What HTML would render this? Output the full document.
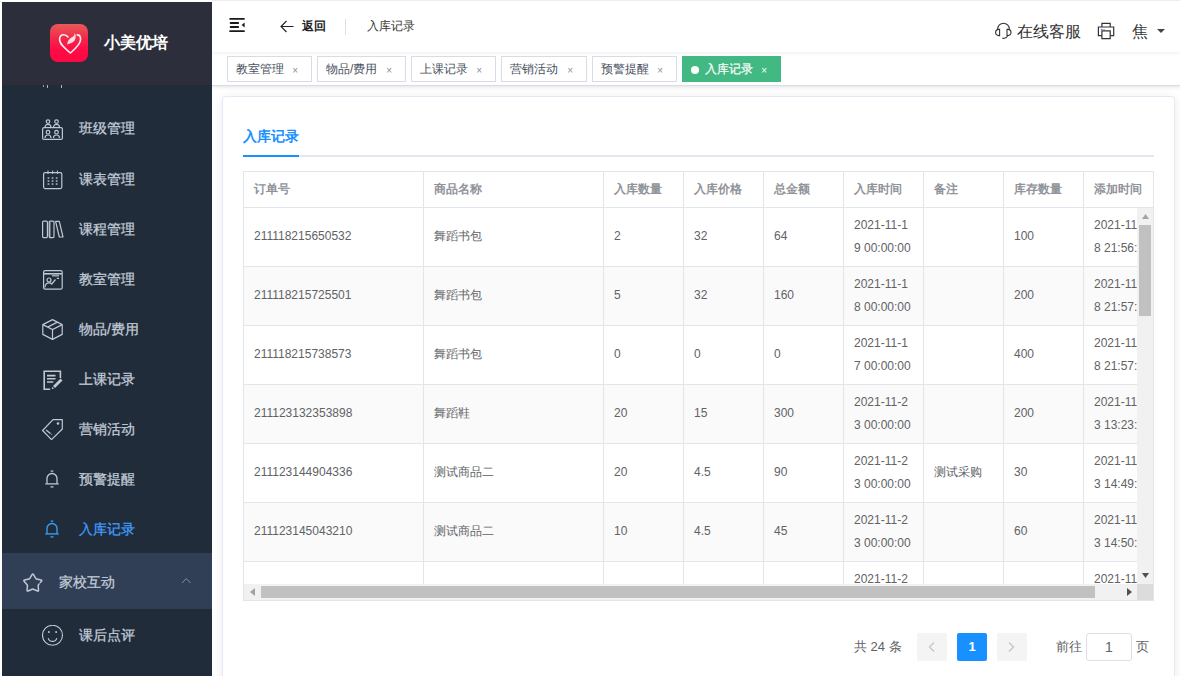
<!DOCTYPE html>
<html><head><meta charset="utf-8">
<style>
*{margin:0;padding:0;box-sizing:border-box}
html,body{width:1180px;height:676px;overflow:hidden;background:#fff;font-family:"Liberation Sans",sans-serif;position:relative}
.abs{position:absolute}
#side{position:absolute;left:2px;top:2px;width:210px;height:674px;background:#212c3b;overflow:hidden;z-index:10}
#logo{position:absolute;left:0;top:0;width:210px;height:83px;background:#2c2f3b}
.logobox{position:absolute;left:48px;top:22px;width:38px;height:38px;border-radius:8px;background:linear-gradient(#e75a58,#f5254a 40%,#ff0a44 70%,#ff0844)}
.logotxt{position:absolute;left:102px;top:30px;font-size:16px;font-weight:bold;color:#fff;line-height:22px;letter-spacing:0}
.mi{position:absolute;left:0;width:210px;height:50px;color:#bfcbd9;font-size:14px}
.mi .t{position:absolute;left:77px;top:0;line-height:50px}
.mi svg{position:absolute;left:40px;top:15px}
#hdr{position:absolute;left:212px;top:0;width:968px;height:52px;background:#fff;z-index:3;box-shadow:0 1px 4px rgba(0,21,41,.08)}
#tags{position:absolute;left:212px;top:52px;width:968px;height:34px;background:#fff;border-bottom:1px solid #d8dce5;z-index:2;box-shadow:0 1px 4px 0 rgba(0,0,0,.12)}
.tag{position:absolute;top:4px;height:26px;border:1px solid #d8dce5;color:#495060;font-size:12px;line-height:25px;padding-left:8px;background:#fff}
.tag .x{position:absolute;right:13px;top:1px;font-size:10px;color:#8c9196}
#main{position:absolute;left:212px;top:84px;width:968px;height:592px;background:#fff}
#card{position:absolute;left:222px;top:96px;width:953px;height:600px;background:#fff;border:1px solid #e3e8f2;border-radius:4px;box-shadow:0 2px 12px 0 rgba(0,0,0,.08)}
.hd{font-size:12px;line-height:20px;color:#909399;font-weight:bold;white-space:nowrap}
.td{font-size:12px;line-height:23px;color:#606266;white-space:nowrap}
.pg{font-size:13px;line-height:16px;color:#606266;white-space:nowrap}
</style></head><body>
<div class="abs" style="left:0;top:1px;width:2px;height:1px;background:#eee"></div>
<div id="side">
  <svg class="abs" style="left:40px;top:117px" width="21" height="21" viewBox="0 0 21 21" fill="none" stroke="#bfc8d3" stroke-width="1.2" ><rect x="0.6" y="8.6" width="19.8" height="11.8" rx="1.5"/><circle cx="6" cy="2.6" r="1.8"/><path d="M3 8.4A3 3 0 0 1 9 8.4"/><circle cx="14.5" cy="2.6" r="1.8"/><path d="M11.5 8.4A3 3 0 0 1 17.5 8.4"/><circle cx="6" cy="13.2" r="1.8"/><path d="M3 19A3 3 0 0 1 9 19"/><circle cx="14.5" cy="13.2" r="1.8"/><path d="M11.5 19A3 3 0 0 1 17.5 19"/></svg><svg class="abs" style="left:41px;top:168px" width="20" height="20" viewBox="0 0 20 20" fill="none" stroke="#bfc8d3" stroke-width="1.2" ><rect x="0.6" y="2.6" width="18.2" height="16" rx="1.5"/><path d="M5 0.5V4M9.7 0.5V4M14.4 0.5V4" stroke-width="1"/><g fill="#bfc8d3" fill-opacity=".8" stroke="none"><rect x="4.6" y="7.2" width="1.7" height="1.7"/><rect x="8.7" y="7.2" width="1.7" height="1.7"/><rect x="12.8" y="7.2" width="1.7" height="1.7"/><rect x="4.6" y="10.2" width="1.7" height="1.7"/><rect x="8.7" y="10.2" width="1.7" height="1.7"/><rect x="12.8" y="10.2" width="1.7" height="1.7"/><rect x="4.6" y="13.2" width="1.7" height="1.7"/><rect x="8.7" y="13.2" width="1.7" height="1.7"/><rect x="12.8" y="13.2" width="1.7" height="1.7"/></g></svg><svg class="abs" style="left:40px;top:218px" width="22" height="19" viewBox="0 0 22 19" fill="none" stroke="#bfc8d3" stroke-width="1.2" ><rect x="0.6" y="1.1" width="4.8" height="16.5" rx="1"/><rect x="7.2" y="1.1" width="4.8" height="16.5" rx="1"/><path d="M13.6 1.3H17.3L21 17H17.3Z" stroke-linejoin="round"/><path d="M7.9 1.5V17.2" stroke-width="1.6" stroke-opacity=".6"/></svg><svg class="abs" style="left:41px;top:268px" width="20" height="20" viewBox="0 0 20 20" fill="none" stroke="#bfc8d3" stroke-width="1.2" ><rect x="0.6" y="0.6" width="18.6" height="18.6" rx="1.5"/><path d="M1 3.8H19" stroke-width="1.6"/><path d="M9 5.8H16" stroke-width="1.2"/><circle cx="6" cy="10" r="2"/><path d="M1.8 17.5Q2.5 12.8 6 12.8Q7.6 12.8 8.8 14L12.5 9.5M13.8 8.3H16"/></svg><svg class="abs" style="left:40px;top:317px" width="21" height="21" viewBox="0 0 21 21" fill="none" stroke="#bfc8d3" stroke-width="1.2" ><path d="M10.5 0.6L20.2 5.6V15.4L10.5 20.4L0.8 15.4V5.6Z" stroke-linejoin="round"/><path d="M0.8 5.6L10.5 10.6L20.2 5.6M10.5 10.6V20.4M5.6 8.1L15.4 3.1"/></svg><svg class="abs" style="left:41px;top:368px" width="20" height="21" viewBox="0 0 20 21" fill="none" stroke="#bfc8d3" stroke-width="1.2" ><path d="M7.2 19.3H1.2V1.2H17.4V8" stroke-width="1.6"/><path d="M4 5.6H12.5M4 8.8H12.5M4 12H10.3" stroke-width="1.6"/><path d="M18.5 9.5L11 17" stroke-width="2.8"/><path d="M9.2 18.6L10.3 17.6" stroke-width="1.8"/></svg><svg class="abs" style="left:40px;top:417px" width="21" height="21" viewBox="0 0 21 21" fill="none" stroke="#bfc8d3" stroke-width="1.2" ><path d="M11 0.7H20.3V10L9.5 20.6L0.6 11.5Z" stroke-linejoin="round"/><circle cx="16" cy="4.5" r="1.3" fill="#bfc8d3" stroke="none"/><path d="M4 11L8.5 14.5"/><circle cx="9.6" cy="15.2" r="0.5" fill="#bfc8d3" stroke="none"/></svg><svg class="abs" style="left:43px;top:468px" width="14" height="18" viewBox="0 0 14 18" fill="none" stroke="#bfc8d3" stroke-width="1.2" ><path d="M2 13.5V8.5A5 5 0 0 1 12 8.5V13.5" stroke-width="1.3"/><path d="M0.3 13.9H13.7" stroke-width="1.3"/><path d="M5.5 16.9H8.5" stroke-width="1.3"/><path d="M5.7 1.1H8.3" stroke-width="1.3"/></svg><svg class="abs" style="left:43px;top:518px" width="14" height="18" viewBox="0 0 14 18" fill="none" stroke="#409eff" stroke-width="1.2" ><path d="M2 13.5V8.5A5 5 0 0 1 12 8.5V13.5" stroke-width="1.3"/><path d="M0.3 13.9H13.7" stroke-width="1.3"/><path d="M5.5 16.9H8.5" stroke-width="1.3"/><path d="M5.7 1.1H8.3" stroke-width="1.3"/></svg><div class="abs" style="left:77px;top:116px;line-height:20px;font-size:14px;color:#c3cdd9;-webkit-text-stroke:0.25px #c3cdd9">班级管理</div><div class="abs" style="left:77px;top:167px;line-height:20px;font-size:14px;color:#c3cdd9;-webkit-text-stroke:0.25px #c3cdd9">课表管理</div><div class="abs" style="left:77px;top:217px;line-height:20px;font-size:14px;color:#c3cdd9;-webkit-text-stroke:0.25px #c3cdd9">课程管理</div><div class="abs" style="left:77px;top:267px;line-height:20px;font-size:14px;color:#c3cdd9;-webkit-text-stroke:0.25px #c3cdd9">教室管理</div><div class="abs" style="left:77px;top:317px;line-height:20px;font-size:14px;color:#c3cdd9;-webkit-text-stroke:0.25px #c3cdd9">物品/费用</div><div class="abs" style="left:77px;top:367px;line-height:20px;font-size:14px;color:#c3cdd9;-webkit-text-stroke:0.25px #c3cdd9">上课记录</div><div class="abs" style="left:77px;top:417px;line-height:20px;font-size:14px;color:#c3cdd9;-webkit-text-stroke:0.25px #c3cdd9">营销活动</div><div class="abs" style="left:77px;top:467px;line-height:20px;font-size:14px;color:#c3cdd9;-webkit-text-stroke:0.25px #c3cdd9">预警提醒</div><div class="abs" style="left:77px;top:517px;line-height:20px;font-size:14px;color:#409eff;-webkit-text-stroke:0.25px #409eff">入库记录</div><div class="abs" style="left:0;top:551px;width:210px;height:56px;background:#303f55"></div><svg class="abs" style="left:20px;top:570px" width="22" height="21" viewBox="0 0 22 21" fill="none" stroke="#bfc8d3" stroke-width="1.2" ><path d="M17.15 11.93L16.53 12.65Q16.13 13.13 16.18 13.76L16.53 18.28Q16.62 19.41 15.57 18.98L11.38 17.24Q10.80 17.00 10.22 17.24L6.03 18.98Q4.98 19.41 5.07 18.28L5.42 13.76Q5.47 13.13 5.07 12.65L2.12 9.20Q1.38 8.34 2.49 8.08L6.90 7.02Q7.51 6.87 7.84 6.33L10.21 2.47Q10.80 1.50 11.39 2.47L13.76 6.33Q14.09 6.87 14.70 7.02L19.11 8.08Q20.22 8.34 19.48 9.20L18.38 10.50" stroke-linejoin="round" stroke-linecap="round" stroke-width="1.5"/></svg><div class="abs" style="left:57px;top:570px;line-height:20px;font-size:14px;color:#c3cdd9;-webkit-text-stroke:0.25px #c3cdd9">家校互动</div><svg class="abs" style="left:179px;top:575px" width="11" height="7" viewBox="0 0 11 7" fill="none" stroke="#8592a3" stroke-width="1"><path d="M1 6L5.25 1.6L9.5 6"/></svg><svg class="abs" style="left:40px;top:623px" width="22" height="22" viewBox="0 0 22 22" fill="none" stroke="#bfc8d3" stroke-width="1.2" ><circle cx="10.5" cy="10.3" r="10" stroke-width="1.1"/><rect x="6" y="6.2" width="1.7" height="1.7" fill="#bfc8d3" stroke="none"/><rect x="13.3" y="6.2" width="1.7" height="1.7" fill="#bfc8d3" stroke="none"/><path d="M6.2 13.1A4.45 4.45 0 0 0 14.8 13.1" stroke-width="1.1"/></svg><div class="abs" style="left:77px;top:623px;line-height:20px;font-size:14px;color:#c3cdd9;-webkit-text-stroke:0.25px #c3cdd9">课后点评</div><div class="abs" style="left:41px;top:83px;width:1px;height:2px;background:#8f9aa8"></div><div class="abs" style="left:45px;top:83px;width:1px;height:3px;background:#aab4c0"></div><div class="abs" style="left:59px;top:83px;width:1px;height:3px;background:#aab4c0"></div>
  <div id="logo">
    <div class="logobox"><svg class="abs" style="left:0;top:0" width="38" height="38" viewBox="0 0 38 38"><path d="M18 13C15.5 9.8 9.6 9.6 9.6 15.4C9.6 20 15 24.5 20.4 29C25 25 30.6 20.5 30.6 15.3C30.6 12.5 29.2 10.9 27.2 10.9" stroke="#fff" stroke-opacity=".92" stroke-width="1.6" fill="none" stroke-linecap="round" stroke-linejoin="round"/><path d="M17.4 20.8C17 17 19.6 14.5 22.5 13C23.8 12.2 24.6 10.6 24.7 8.9C26.8 12.6 25.5 18.2 20 19.4C18.9 19.7 18 20.2 17.4 20.8Z" fill="#fff" fill-opacity=".85"/></svg></div>
    <div class="logotxt">小美优培</div>
  </div>
</div>
<div id="hdr">
  <div class="abs" style="left:0;top:0;width:968px;height:1px;background:#eee"></div>
  <svg class="abs" style="left:17px;top:17px" width="16" height="16" viewBox="0 0 16 16"><g fill="#1a1a1a"><rect x="0.3" y="1.1" width="15.5" height="1.6" rx="0.6"/><rect x="0.8" y="5.1" width="9.2" height="1.8" rx="0.6"/><rect x="0.8" y="9.1" width="9.2" height="1.8" rx="0.6"/><rect x="0.3" y="13.2" width="15.5" height="1.8" rx="0.6"/><path d="M15.6 5.4L12.6 7.9L15.6 10.4Z"/></g></svg>
  <svg class="abs" style="left:68px;top:20px" width="14" height="13" viewBox="0 0 14 13"><path d="M13.5 6.5H1.2M6.5 1L1 6.5L6.5 12" stroke="#222" stroke-width="1.15" fill="none"/></svg>
  <div class="abs" style="left:90px;top:18px;font-size:12px;font-weight:bold;color:#222;line-height:17px">返回</div>
  <div class="abs" style="left:133px;top:19px;width:1px;height:16px;background:#dcdfe6"></div>
  <div class="abs" style="left:155px;top:18px;font-size:12px;color:#333;line-height:17px">入库记录</div>
  <svg class="abs" style="left:782px;top:22px" width="18" height="18" viewBox="0 0 18 18" fill="none" stroke="#333" stroke-width="1.1"><path d="M3.7 7.4V7A5.8 5.8 0 0 1 15.3 7V7.4"/><path d="M5.6 7.4V13.6H4.7A3.1 3.1 0 0 1 4.7 7.4Z"/><path d="M13 7.4V13.6H13.9A3.1 3.1 0 0 0 13.9 7.4Z"/><path d="M13.4 13.8Q13.2 16.4 8.3 16.4"/></svg>
  <div class="abs" style="left:805px;top:22px;font-size:16px;color:#333;line-height:20px">在线客服</div>
  <svg class="abs" style="left:885px;top:22px" width="18" height="18" viewBox="0 0 18 18" fill="none" stroke="#333" stroke-width="1.2"><path d="M4.9 5V1.4H13.2V5"/><path d="M4.9 13.7H1.4V5H16.7V13.7H13.2"/><path d="M4.9 8.9H13.2V16.7H4.9Z"/><path d="M3.8 7.4H5.6M6.6 7.4H7.6" stroke="#3a7bd5" stroke-width="1"/></svg>
  <div class="abs" style="left:920px;top:22px;font-size:16px;color:#333;line-height:20px">焦</div>
  <svg class="abs" style="left:945px;top:29px" width="8" height="4" viewBox="0 0 8 4"><path d="M0 0H8L4 4Z" fill="#444"/></svg>
</div>
<div id="main"></div>
<div id="tags">
  <div class="tag" style="left:15px;width:85px">教室管理<span class="x">×</span></div>
  <div class="tag" style="left:105px;width:89px">物品/费用<span class="x">×</span></div>
  <div class="tag" style="left:199px;width:85px">上课记录<span class="x">×</span></div>
  <div class="tag" style="left:289px;width:86px">营销活动<span class="x">×</span></div>
  <div class="tag" style="left:380px;width:85px">预警提醒<span class="x">×</span></div>
  <div class="tag" style="left:470px;width:99px;background:#42b983;border-color:#42b983;color:#fff;padding-left:22px;-webkit-text-stroke:0.2px #fff"><span class="abs" style="left:8px;top:9px;width:8px;height:8px;border-radius:50%;background:#fff"></span>入库记录<span class="x" style="color:#fff;-webkit-text-stroke:0">×</span></div>
</div>
<div id="card"><div class="abs" style="left:20px;top:29px;font-size:14px;line-height:20px;color:#1890ff;font-weight:bold">入库记录</div><div class="abs" style="left:20px;top:58px;width:911px;height:2px;background:#e4e7ed"></div><div class="abs" style="left:20px;top:58px;width:56px;height:2px;background:#1890ff"></div></div>
<div id="tbl"><div class="abs" style="left:244px;top:267px;width:893px;height:58px;background:#fafafa"></div><div class="abs" style="left:244px;top:385px;width:893px;height:58px;background:#fafafa"></div><div class="abs" style="left:244px;top:503px;width:893px;height:58px;background:#fafafa"></div><div class="abs" style="left:243px;top:171px;width:911px;height:1px;background:#dfe6ec"></div><div class="abs" style="left:243px;top:207px;width:911px;height:1px;background:#dfe6ec"></div><div class="abs" style="left:243px;top:266px;width:894px;height:1px;background:#dfe6ec"></div><div class="abs" style="left:243px;top:325px;width:894px;height:1px;background:#dfe6ec"></div><div class="abs" style="left:243px;top:384px;width:894px;height:1px;background:#dfe6ec"></div><div class="abs" style="left:243px;top:443px;width:894px;height:1px;background:#dfe6ec"></div><div class="abs" style="left:243px;top:502px;width:894px;height:1px;background:#dfe6ec"></div><div class="abs" style="left:243px;top:561px;width:894px;height:1px;background:#dfe6ec"></div><div class="abs" style="left:243px;top:600px;width:911px;height:1px;background:#dfe6ec"></div><div class="abs" style="left:243px;top:171px;width:1px;height:430px;background:#dfe6ec"></div><div class="abs" style="left:1153px;top:171px;width:1px;height:430px;background:#dfe6ec"></div><div class="abs" style="left:423px;top:171px;width:1px;height:413px;background:#dfe6ec"></div><div class="abs" style="left:603px;top:171px;width:1px;height:413px;background:#dfe6ec"></div><div class="abs" style="left:683px;top:171px;width:1px;height:413px;background:#dfe6ec"></div><div class="abs" style="left:763px;top:171px;width:1px;height:413px;background:#dfe6ec"></div><div class="abs" style="left:843px;top:171px;width:1px;height:413px;background:#dfe6ec"></div><div class="abs" style="left:923px;top:171px;width:1px;height:413px;background:#dfe6ec"></div><div class="abs" style="left:1003px;top:171px;width:1px;height:413px;background:#dfe6ec"></div><div class="abs" style="left:1083px;top:171px;width:1px;height:413px;background:#dfe6ec"></div><div class="abs hd" style="left:254px;top:179px">订单号</div><div class="abs hd" style="left:434px;top:179px">商品名称</div><div class="abs hd" style="left:614px;top:179px">入库数量</div><div class="abs hd" style="left:694px;top:179px">入库价格</div><div class="abs hd" style="left:774px;top:179px">总金额</div><div class="abs hd" style="left:854px;top:179px">入库时间</div><div class="abs hd" style="left:934px;top:179px">备注</div><div class="abs hd" style="left:1014px;top:179px">库存数量</div><div class="abs hd" style="left:1094px;top:179px">添加时间</div><div class="abs" style="left:244px;top:208px;width:893px;height:376px;overflow:hidden"><div class="abs" style="left:-244px;top:-208px;width:1180px;height:676px"><div class="abs td" style="left:254px;top:225px">211118215650532</div><div class="abs td" style="left:434px;top:225px">舞蹈书包</div><div class="abs td" style="left:614px;top:225px">2</div><div class="abs td" style="left:694px;top:225px">32</div><div class="abs td" style="left:774px;top:225px">64</div><div class="abs td" style="left:854px;top:214px">2021-11-1<br>9 00:00:00</div><div class="abs td" style="left:1014px;top:225px">100</div><div class="abs td" style="left:1094px;top:214px">2021-11-1<br>8 21:56:11</div><div class="abs td" style="left:254px;top:284px">211118215725501</div><div class="abs td" style="left:434px;top:284px">舞蹈书包</div><div class="abs td" style="left:614px;top:284px">5</div><div class="abs td" style="left:694px;top:284px">32</div><div class="abs td" style="left:774px;top:284px">160</div><div class="abs td" style="left:854px;top:273px">2021-11-1<br>8 00:00:00</div><div class="abs td" style="left:1014px;top:284px">200</div><div class="abs td" style="left:1094px;top:273px">2021-11-1<br>8 21:57:11</div><div class="abs td" style="left:254px;top:343px">211118215738573</div><div class="abs td" style="left:434px;top:343px">舞蹈书包</div><div class="abs td" style="left:614px;top:343px">0</div><div class="abs td" style="left:694px;top:343px">0</div><div class="abs td" style="left:774px;top:343px">0</div><div class="abs td" style="left:854px;top:332px">2021-11-1<br>7 00:00:00</div><div class="abs td" style="left:1014px;top:343px">400</div><div class="abs td" style="left:1094px;top:332px">2021-11-1<br>8 21:57:11</div><div class="abs td" style="left:254px;top:402px">211123132353898</div><div class="abs td" style="left:434px;top:402px">舞蹈鞋</div><div class="abs td" style="left:614px;top:402px">20</div><div class="abs td" style="left:694px;top:402px">15</div><div class="abs td" style="left:774px;top:402px">300</div><div class="abs td" style="left:854px;top:391px">2021-11-2<br>3 00:00:00</div><div class="abs td" style="left:1014px;top:402px">200</div><div class="abs td" style="left:1094px;top:391px">2021-11-2<br>3 13:23:11</div><div class="abs td" style="left:254px;top:461px">211123144904336</div><div class="abs td" style="left:434px;top:461px">测试商品二</div><div class="abs td" style="left:614px;top:461px">20</div><div class="abs td" style="left:694px;top:461px">4.5</div><div class="abs td" style="left:774px;top:461px">90</div><div class="abs td" style="left:854px;top:450px">2021-11-2<br>3 00:00:00</div><div class="abs td" style="left:934px;top:461px">测试采购</div><div class="abs td" style="left:1014px;top:461px">30</div><div class="abs td" style="left:1094px;top:450px">2021-11-2<br>3 14:49:11</div><div class="abs td" style="left:254px;top:520px">211123145043210</div><div class="abs td" style="left:434px;top:520px">测试商品二</div><div class="abs td" style="left:614px;top:520px">10</div><div class="abs td" style="left:694px;top:520px">4.5</div><div class="abs td" style="left:774px;top:520px">45</div><div class="abs td" style="left:854px;top:509px">2021-11-2<br>3 00:00:00</div><div class="abs td" style="left:1014px;top:520px">60</div><div class="abs td" style="left:1094px;top:509px">2021-11-2<br>3 14:50:11</div><div class="abs td" style="left:854px;top:568px">2021-11-2<br>3 00:00:00</div><div class="abs td" style="left:1094px;top:568px">2021-11-2<br>3 14:50:11</div></div></div><div class="abs" style="left:1137px;top:208px;width:16px;height:376px;background:#f1f1f1"></div><div class="abs" style="left:1139px;top:225px;width:12px;height:91px;background:#c1c1c1"></div><svg class="abs" style="left:1142px;top:214px" width="7" height="5" viewBox="0 0 7 5"><path d="M0 5H7L3.5 0Z" fill="#a3a3a3"/></svg><svg class="abs" style="left:1142px;top:573px" width="7" height="5" viewBox="0 0 7 5"><path d="M0 0H7L3.5 5Z" fill="#505050"/></svg><div class="abs" style="left:244px;top:584px;width:893px;height:16px;background:#f1f1f1"></div><div class="abs" style="left:261px;top:586px;width:834px;height:12px;background:#c1c1c1"></div><svg class="abs" style="left:250px;top:588px" width="5" height="8" viewBox="0 0 5 8"><path d="M5 0V8L0 4Z" fill="#a3a3a3"/></svg><svg class="abs" style="left:1127px;top:588px" width="5" height="8" viewBox="0 0 5 8"><path d="M0 0V8L5 4Z" fill="#505050"/></svg><div class="abs" style="left:1137px;top:584px;width:16px;height:16px;background:#dcdcdc"></div><div class="abs pg" style="left:854px;top:639px">共 24 条</div><div class="abs" style="left:917px;top:633px;width:30px;height:28px;border-radius:2px;background:#f4f4f5"></div><svg class="abs" style="left:928px;top:642px" width="7" height="10" viewBox="0 0 7 10" fill="none" stroke="#c0c4cc" stroke-width="1.3"><path d="M6 0.5L1.5 5L6 9.5"/></svg><div class="abs" style="left:957px;top:633px;width:30px;height:28px;border-radius:2px;background:#1890ff;color:#fff;font-size:13px;font-weight:bold;text-align:center;line-height:28px">1</div><div class="abs" style="left:997px;top:633px;width:30px;height:28px;border-radius:2px;background:#f4f4f5"></div><svg class="abs" style="left:1008px;top:642px" width="7" height="10" viewBox="0 0 7 10" fill="none" stroke="#c0c4cc" stroke-width="1.3"><path d="M1 0.5L5.5 5L1 9.5"/></svg><div class="abs pg" style="left:1056px;top:639px">前往</div><div class="abs" style="left:1086px;top:633px;width:46px;height:28px;border:1px solid #dcdfe6;border-radius:3px;font-size:14px;color:#606266;text-align:center;line-height:26px">1</div><div class="abs pg" style="left:1136px;top:639px">页</div></div>
</body></html>
